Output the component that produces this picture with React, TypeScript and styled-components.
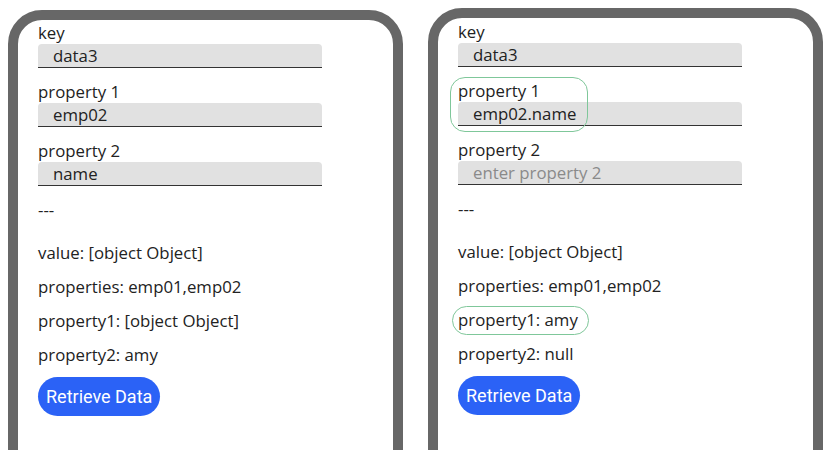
import React from "react";
import styled, { createGlobalStyle } from "styled-components";

const Global = createGlobalStyle`
  html, body { margin: 0; padding: 0; background: #ffffff; overflow: hidden; }
  body { font-family: "Open Sans", "Noto Sans", sans-serif; color: #222; }
`;

const Stage = styled.div`
  display: flex;
  align-items: flex-start;
  gap: 25px;
  padding-left: 8px;
  width: 830px;
  height: 450px;
  overflow: hidden;
`;

const Phone = styled.div<{ $top: number; $pad: number }>`
  box-sizing: border-box;
  width: 395px;
  height: 500px;
  margin-top: ${(p) => p.$top}px;
  border: 10px solid #676767;
  border-radius: 34px;
  padding: ${(p) => p.$pad}px 20px 0 20px;
  display: flex;
  flex-direction: column;
  background: #fff;
`;

const Field = styled.div`
  position: relative;
  display: flex;
  flex-direction: column;
  margin-bottom: 13px;
`;

const Label = styled.div`
  font-size: 16.8px;
  line-height: 22px;
  height: 22px;
`;

const Input = styled.input`
  box-sizing: border-box;
  width: 284px;
  height: 24px;
  border: none;
  border-bottom: 1px solid #333;
  border-radius: 4px 4px 0 0;
  background: #e1e1e1;
  padding: 0 0 0 15px;
  margin: 0;
  font-family: "Open Sans", "Noto Sans", sans-serif;
  font-size: 16.8px;
  color: #222;
  outline: none;
  &::placeholder { color: #8a8a8a; }
`;

const Divider = styled.div`
  font-size: 16.8px;
  line-height: 22px;
  margin-bottom: 21px;
`;

const Line = styled.div`
  position: relative;
  font-size: 16.8px;
  line-height: 22px;
  margin-bottom: 12px;
  align-self: flex-start;
`;

const Mark = styled.div<{ $l: number; $t: number; $w: number; $h: number; $r: number }>`
  position: absolute;
  left: ${(p) => p.$l}px;
  top: ${(p) => p.$t}px;
  width: ${(p) => p.$w}px;
  height: ${(p) => p.$h}px;
  border: 1.3px solid #7fc79a;
  border-radius: ${(p) => p.$r}px;
  box-sizing: border-box;
  pointer-events: none;
`;

const Button = styled.button`
  align-self: flex-start;
  margin-top: -1px;
  height: 39px;
  padding: 0 8px;
  border: none;
  border-radius: 20px;
  background: #2b62f6;
  color: #fff;
  font-family: Roboto, sans-serif;
  font-size: 18px;
  cursor: pointer;
`;

type Props = {
  top: number;
  pad: number;
  prop1: string;
  prop2: string;
  out1: string;
  out2: string;
  marks: boolean;
};

function Panel({ top, pad, prop1, prop2, out1, out2, marks }: Props) {
  return (
    <Phone $top={top} $pad={pad}>
      <Field>
        <Label>key</Label>
        <Input defaultValue="data3" placeholder="enter key" />
      </Field>
      <Field>
        {marks && <Mark $l={-8} $t={-3} $w={138} $h={55} $r={15} />}
        <Label>property 1</Label>
        <Input defaultValue={prop1} placeholder="enter property 1" />
      </Field>
      <Field>
        <Label>property 2</Label>
        <Input defaultValue={prop2} placeholder="enter property 2" />
      </Field>
      <Divider>---</Divider>
      <Line>value: [object Object]</Line>
      <Line>properties: emp01,emp02</Line>
      <Line>
        {marks && <Mark $l={-6} $t={-3} $w={137} $h={29} $r={15} />}
        property1: {out1}
      </Line>
      <Line>property2: {out2}</Line>
      <Button>Retrieve Data</Button>
    </Phone>
  );
}

export default function App() {
  return (
    <>
      <Global />
      <Stage>
        <Panel top={10} pad={2} prop1="emp02" prop2="name" out1="[object Object]" out2="amy" marks={false} />
        <Panel top={8} pad={3} prop1="emp02.name" prop2="" out1="amy" out2="null" marks={true} />
      </Stage>
    </>
  );
}
